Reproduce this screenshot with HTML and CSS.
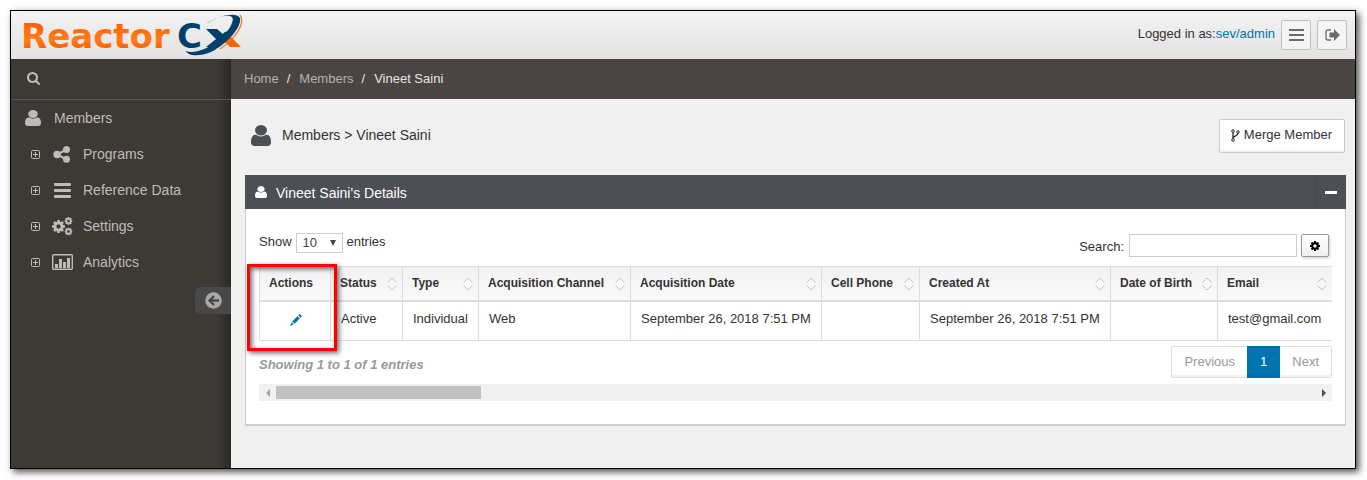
FILE: index.html
```html
<!DOCTYPE html>
<html lang="en">
<head>
    <meta charset="UTF-8">
    <meta name="viewport" content="width=device-width, initial-scale=1.0">
    <title>ReactorCX - Vineet Saini</title>
    <link rel="stylesheet" href="styles.css">
</head>
<body>

    <!-- Icon set -->
    <svg class="icon-defs" aria-hidden="true">
        <symbol id="i-user" viewBox="256 128 1280 1536" preserveAspectRatio="none"><path d="M1536 1399q0 109-62.5 187t-150.5 78h-854q-88 0-150.5-78t-62.5-187q0-85 8.5-160.5t31.5-152 58.5-131 94-89 134.5-34.5q131 128 313 128t313-128q76 0 134.5 34.5t94 89 58.5 131 31.5 152 8.5 160.5zm-256-887q0 159-112.5 271.5t-271.5 112.5-271.5-112.5-112.5-271.5 112.5-271.5 271.5-112.5 271.5 112.5 112.5 271.5z"/></symbol>
        <symbol id="i-search" viewBox="64 128 1664 1664"><path d="M1216 832q0-185-131.500-316.500t-316.500-131.500-316.500 131.500-131.500 316.500 131.500 316.500 316.500 131.500 316.500-131.500 131.500-316.500zm512 832q0 52-38 90t-90 38q-54 0-90-38l-343-342q-179 124-399 124-143 0-273.500-55.500t-225-150-150-225-55.500-273.500 55.500-273.500 150-225 225-150 273.500-55.500 273.500 55.500 225 150 150 225 55.500 273.500q0 220-124 399l343 343q37 37 37 90z"/></symbol>
        <symbol id="i-cog" viewBox="128 128 1536 1536"><path d="M1152 896q0-106-75-181t-181-75-181 75-75 181 75 181 181 75 181-75 75-181zm512-109v222q0 12-8 23t-20 13l-185 28q-19 54-39 91 35 50 107 138 10 12 10 25t-9 23q-27 37-99 108t-94 71q-12 0-26-9l-138-108q-44 23-91 38-16 136-29 186-7 28-36 28h-222q-14 0-24.500-8.500t-11.500-21.500l-28-184q-49-16-90-37l-141 107q-10 9-25 9-14 0-25-11-126-114-165-168-7-10-7-23 0-12 8-23 15-21 51-66.500t54-70.500q-27-50-41-99l-183-27q-13-2-21-12.500t-8-23.500v-222q0-12 8-23t19-13l186-28q14-46 39-92-40-57-107-138-10-12-10-24 0-10 9-23 26-36 98.500-107.500t94.500-71.500q13 0 26 10l138 107q44-23 91-38 16-136 29-186 7-28 36-28h222q14 0 24.500 8.500t11.500 21.500l28 184q49 16 90 37l142-107q9-9 24-9 13 0 25 10 129 119 165 170 7 8 7 22 0 12-8 23-15 21-51 66.500t-54 70.500q26 50 41 98l183 28q13 2 21 12.500t8 23.500z"/></symbol>
        <symbol id="i-cogs" viewBox="0 0 21 19"><use href="#i-cog" x="0" y="3" width="13" height="13"/><use href="#i-cog" x="12.500" y="0" width="8" height="8"/><use href="#i-cog" x="12.500" y="10.500" width="8" height="8"/></symbol>
        <symbol id="i-share" viewBox="0 0 18 17"><path d="M13.500 3.500L4 8.500l9.500 5" fill="none" stroke="currentColor" stroke-width="2"/><circle cx="4" cy="8.500" r="3.700"/><circle cx="13.500" cy="3.600" r="3.500"/><circle cx="13.500" cy="13.300" r="3.500"/></symbol>
        <symbol id="i-bars" viewBox="0 0 17 15"><path d="M1 0h15q1 0 1 1v1q0 1-1 1H1Q0 3 0 2V1Q0 0 1 0zM1 6h15q1 0 1 1v1q0 1-1 1H1Q0 9 0 8V7Q0 6 1 6zM1 12h15q1 0 1 1v1q0 1-1 1H1q-1 0-1-1v-1q0-1 1-1z"/></symbol>
        <symbol id="i-menu" viewBox="0 0 15 12"><path d="M0 0h15v2H0zM0 5h15v2H0zM0 10h15v2H0z"/></symbol>
        <symbol id="i-chart" viewBox="0 0 21 16"><rect x=".7" y=".7" width="19.600" height="14.600" rx="1" fill="none" stroke="currentColor" stroke-width="1.400"/><path d="M3 10h3v4H3zM7 5h3v9H7zM11 8h3v6h-3zM15 4h3v10h-3z"/></symbol>
        <symbol id="i-plus" viewBox="0 0 9 9"><rect x=".5" y=".5" width="8" height="8" rx="1" fill="none" stroke="currentColor"/><path d="M2 4h5v1H2zM4 2h1v5H4z"/></symbol>
        <symbol id="i-signout" viewBox="0 0 15 12"><path d="M6 1H3Q1 1 1 3v6q0 2 2 2h3" fill="none" stroke="currentColor" stroke-width="1.300"/><path d="M9 0l6 6-6 6V8.500H4.500v-5H9z"/></symbol>
        <symbol id="i-fork" viewBox="0 0 9 13"><g fill="none" stroke="currentColor"><circle cx="2" cy="2" r="1.300"/><circle cx="2" cy="11" r="1.300"/><circle cx="7" cy="3" r="1.300"/><path d="M2 3v7M7 4c0 3-4 2.500-5 5" stroke-width="1.400"/></g></symbol>
        <symbol id="i-pencil" viewBox="0 0 12 12"><path d="M2.200 7.400l5.200-5.200 2.400 2.400-5.200 5.200zM8.200 1.500l1-1q.6-.5 1.200 0l1.100 1.100q.5.600 0 1.200l-1 1zM1.700 8.200l2.100 2.100L0 12z"/></symbol>
        <symbol id="i-back" viewBox="0 0 17 17"><circle cx="8.500" cy="8.500" r="8.300"/><path d="M9 4L4.500 8.500 9 13M5 8.500h9" fill="none" stroke="#484848" stroke-width="2.300"/></symbol>
        <symbol id="i-sort" viewBox="0 0 10 14"><path d="M.5 5.500L5 1l4.500 4.500M.5 8.500L5 13l4.500-4.500" fill="none" stroke="#c4c4c4"/></symbol>
    </svg>

    <div class="app">
        <header class="header">
            <a class="logo" href="#" aria-label="ReactorCX">
                <svg width="226" height="46" viewBox="0 0 226 46">
                    <defs>
                        <linearGradient id="orange" x1="0" y1="0" x2="0" y2="1">
                            <stop offset=".2" stop-color="#ff6200"/>
                            <stop offset=".6" stop-color="#ff7d1c"/>
                            <stop offset=".8" stop-color="#ff6200"/>
                        </linearGradient>
                    </defs>
                    <text class="logo-text" x="2" y="36" fill="url(#orange)">Reactor</text>
                    <text class="logo-text logo-c" x="158" y="36">C</text>
                    <!-- emblem -->
                    <path d="M203 27l6-5 13 13h-11z" fill="#ff6200"/>
                    <path d="M187 17h11l7 6-6 6zM206 20l9-3-16 18h-12z" fill="#00416b"/>
                    <path d="M187 12C202 2 218 0 221 6c2 9-13 26-29 34-12 5-23 4-25-1 7 3 19-1 29-8 14-11 20-22 17-26-5-3-15 0-26 7z" fill="#00416b"/>
                    <path d="M221 3c6 8-5 24-20 34" fill="none" stroke="#ff7420" stroke-width="1.300"/>
                </svg>
            </a>
            <div class="login-info">
                <span>Logged in as:<a href="#">sev/admin</a></span>
                <button class="header-btn" aria-label="Toggle menu"><svg width="15" height="12"><use href="#i-menu"/></svg></button>
                <button class="header-btn" aria-label="Sign out"><svg width="15" height="12"><use href="#i-signout"/></svg></button>
            </div>
        </header>

        <div class="layout">
            <aside class="sidebar">
                <button class="sidebar-search" aria-label="Search"><svg width="13" height="13"><use href="#i-search"/></svg></button>
                <nav>
                    <a class="nav-top" href="#"><svg width="16" height="16"><use href="#i-user"/></svg>Members</a>
                    <a class="nav-item" href="#"><svg width="9" height="9"><use href="#i-plus"/></svg><span class="nav-icon"><svg width="18" height="17"><use href="#i-share"/></svg></span>Programs</a>
                    <a class="nav-item" href="#"><svg width="9" height="9"><use href="#i-plus"/></svg><span class="nav-icon"><svg width="17" height="15"><use href="#i-bars"/></svg></span>Reference Data</a>
                    <a class="nav-item" href="#"><svg width="9" height="9"><use href="#i-plus"/></svg><span class="nav-icon"><svg width="21" height="19"><use href="#i-cogs"/></svg></span>Settings</a>
                    <a class="nav-item" href="#"><svg width="9" height="9"><use href="#i-plus"/></svg><span class="nav-icon"><svg width="21" height="16"><use href="#i-chart"/></svg></span>Analytics</a>
                </nav>
                <button class="minify" aria-label="Collapse menu"><svg width="17" height="17"><use href="#i-back"/></svg></button>
            </aside>

            <main class="main">
                <nav class="breadcrumb">
                    <a href="#">Home</a><i>/</i><a href="#">Members</a><i>/</i><span>Vineet Saini</span>
                </nav>

                <div class="content">
                    <div class="page-head">
                        <h1><svg width="20" height="21"><use href="#i-user"/></svg>Members &gt; Vineet Saini</h1>
                        <button class="merge-btn"><svg width="9" height="13"><use href="#i-fork"/></svg>Merge Member</button>
                    </div>

                    <section class="panel">
                        <div class="panel-head">
                            <svg width="12" height="12"><use href="#i-user"/></svg>
                            <h2>Vineet Saini's Details</h2>
                            <button class="panel-toggle" aria-label="Collapse"><span></span></button>
                        </div>
                        <div class="panel-body">
                            <div class="toolbar">
                                <div class="length">
                                    <label for="length">Show</label>
                                    <span class="select-wrap">
                                        <select id="length"><option>10</option><option>25</option><option>50</option></select>
                                    </span>
                                    <span>entries</span>
                                </div>
                                <div class="filter">
                                    <label for="search">Search:</label>
                                    <input type="text" id="search">
                                    <button class="cog-btn" aria-label="Columns"><svg width="10" height="10"><use href="#i-cog"/></svg></button>
                                </div>
                            </div>

                            <div class="table-area">
                                <table>
                                    <colgroup>
                                        <col class="c-actions"><col class="c-status"><col class="c-type"><col class="c-channel"><col class="c-date"><col class="c-phone"><col class="c-date"><col class="c-birth"><col>
                                    </colgroup>
                                    <thead>
                                        <tr>
                                            <th>Actions</th>
                                            <th><div class="sortable">Status<svg width="10" height="14"><use href="#i-sort"/></svg></div></th>
                                            <th><div class="sortable">Type<svg width="10" height="14"><use href="#i-sort"/></svg></div></th>
                                            <th><div class="sortable">Acquisition Channel<svg width="10" height="14"><use href="#i-sort"/></svg></div></th>
                                            <th><div class="sortable">Acquisition Date<svg width="10" height="14"><use href="#i-sort"/></svg></div></th>
                                            <th><div class="sortable">Cell Phone<svg width="10" height="14"><use href="#i-sort"/></svg></div></th>
                                            <th><div class="sortable">Created At<svg width="10" height="14"><use href="#i-sort"/></svg></div></th>
                                            <th><div class="sortable">Date of Birth<svg width="10" height="14"><use href="#i-sort"/></svg></div></th>
                                            <th><div class="sortable">Email<svg width="10" height="14"><use href="#i-sort"/></svg></div></th>
                                        </tr>
                                    </thead>
                                    <tbody>
                                        <tr>
                                            <td class="edit"><a href="#" aria-label="Edit"><svg width="12" height="12"><use href="#i-pencil"/></svg></a></td>
                                            <td>Active</td>
                                            <td>Individual</td>
                                            <td>Web</td>
                                            <td>September 26, 2018 7:51 PM</td>
                                            <td></td>
                                            <td>September 26, 2018 7:51 PM</td>
                                            <td></td>
                                            <td>test@gmail.com</td>
                                        </tr>
                                    </tbody>
                                </table>
                                <div class="highlight"></div>
                            </div>

                            <div class="table-foot">
                                <em>Showing 1 to 1 of 1 entries</em>
                                <div class="pager">
                                    <button>Previous</button><button class="active">1</button><button>Next</button>
                                </div>
                            </div>

                            <div class="scrollbar">
                                <span class="arrow arrow-left"></span>
                                <div class="track"><div class="thumb"></div></div>
                                <span class="arrow arrow-right"></span>
                            </div>
                        </div>
                    </section>
                </div>
            </main>
        </div>
    </div>

</body>
</html>
```

FILE: styles.css
```css
* {
    box-sizing: border-box;
}

body {
    margin: 0;
    padding: 10px 11px 11px 10px;
    min-height: 100vh;
    display: flex;
    background: #fff;
    color: #333;
    font-family: "Liberation Sans", Arial, sans-serif;
    font-size: 13px;
    line-height: 18px;
}

a {
    color: #0073b1;
    text-decoration: none;
}

button {
    font: inherit;
    color: inherit;
    padding: 0;
    cursor: pointer;
}

svg {
    fill: currentColor;
    flex-shrink: 0;
}

.icon-defs {
    position: absolute;
    width: 0;
    height: 0;
}

.app {
    flex: 1;
    min-width: 0;
    display: flex;
    flex-direction: column;
    border: 1px solid #000;
    box-shadow: 3px 3px 7px rgba(0, 0, 0, 0.7);
}

/* Header */
.header {
    height: 48px;
    padding: 0 8px;
    display: flex;
    align-items: center;
    justify-content: space-between;
    background: linear-gradient(#f3f3f3, #e2e2e2);
}

.logo {
    height: 46px;
}

.logo-text {
    font-family: "DejaVu Sans", sans-serif;
    font-weight: bold;
    font-size: 34px;
}

.logo-c {
    fill: #00416b;
}

.login-info {
    display: flex;
    align-items: center;
    gap: 6px;
}

.login-info span {
    padding-bottom: 2px;
}

.header-btn {
    width: 30px;
    height: 30px;
    display: flex;
    align-items: center;
    justify-content: center;
    background: #f5f5f5;
    border: 1px solid #bfbfbf;
    border-radius: 2px;
    color: #6d6a69;
}

/* Sidebar */
.layout {
    flex: 1;
    display: flex;
}

.sidebar {
    width: 220px;
    flex-shrink: 0;
    background: linear-gradient(to left, #2b2825, #3d3935 14px);
    color: #c0bbb7;
    font-size: 14px;
}

.sidebar-search {
    width: 100%;
    height: 41px;
    padding: 0 0 2px 16px;
    display: flex;
    align-items: center;
    background: none;
    border: 0;
    border-bottom: 1px solid #525558;
}

.nav-top,
.nav-item {
    height: 36px;
    display: flex;
    align-items: center;
    color: inherit;
}

.nav-top {
    padding-left: 14px;
    gap: 13px;
}

.nav-item {
    padding-left: 20px;
}

.nav-icon {
    width: 43px;
    padding-left: 1px;
    display: flex;
    justify-content: center;
}

.minify {
    width: 36px;
    height: 27px;
    margin: 7px 0 0 auto;
    display: flex;
    align-items: center;
    justify-content: center;
    background: #484848;
    border: 0;
    border-radius: 5px 0 0 5px;
    color: #a8a8a8;
}

/* Main column */
.main {
    flex: 1;
    min-width: 0;
    background: #f0f0f0;
}

.breadcrumb {
    height: 40px;
    padding-left: 13px;
    display: flex;
    align-items: center;
    background: #4a4543;
    color: #e4e4e4;
}

.breadcrumb a {
    color: #b5b1ae;
}

.breadcrumb i {
    padding: 0 9px 0 8px;
    font-style: normal;
}

.content {
    padding: 20px 9px 20px 14px;
}

.page-head {
    display: flex;
    align-items: center;
    justify-content: space-between;
    padding-right: 1px;
    margin-bottom: 22px;
}

.page-head h1 {
    margin: 0;
    padding: 0 0 2px 6px;
    display: flex;
    align-items: center;
    gap: 11px;
    font-size: 14px;
    font-weight: normal;
}

.page-head h1 svg {
    color: #4c4f53;
}

.merge-btn {
    height: 34px;
    padding: 0 12px 2px 11px;
    display: flex;
    align-items: center;
    gap: 4px;
    background: #fff;
    border: 1px solid #ccc;
    border-radius: 2px;
    box-shadow: inset 0 -2px 0 rgba(0, 0, 0, 0.05);
}

/* Panel */
.panel-head {
    height: 34px;
    padding-left: 10px;
    display: flex;
    align-items: center;
    gap: 9px;
    background: #4c4f53;
    color: #fff;
}

.panel-head h2 {
    margin: 0;
    padding-top: 2px;
    flex: 1;
    font-size: 14px;
    font-weight: normal;
}

.panel-toggle {
    width: 31px;
    height: 34px;
    background: none;
    border: 0;
    border-left: 1px solid #45484c;
}

.panel-toggle span {
    display: block;
    width: 12px;
    height: 3px;
    margin: 0 auto;
    background: #fff;
}

.panel-body {
    padding: 24px 13px 23px;
    background: #fff;
    border: 1px solid #ccc;
    border-top: 0;
    border-bottom-width: 2px;
}

.toolbar {
    display: flex;
    justify-content: space-between;
    padding-right: 3px;
    margin-bottom: 8px;
}

.length,
.filter {
    display: flex;
    align-items: center;
    gap: 4px;
}

.length {
    height: 20px;
}

.length label,
.length > span:last-child {
    padding-bottom: 2px;
}

.filter {
    height: 25px;
}

.filter label {
    padding: 2px 1px 0 0;
}

.select-wrap {
    position: relative;
}

.select-wrap::after {
    content: "";
    position: absolute;
    right: 7px;
    top: 7px;
    border: 3px solid transparent;
    border-top: 6px solid #444;
    border-bottom: 0;
    pointer-events: none;
}

.length select {
    display: block;
    width: 47px;
    height: 20px;
    padding: 0 6px;
    appearance: none;
    background: #fff;
    border: 1px solid #ccc;
    border-radius: 0;
    color: #444;
    font: inherit;
}

.filter input {
    width: 168px;
    height: 23px;
    border: 1px solid #ccc;
}

.cog-btn {
    width: 28px;
    height: 23px;
    display: flex;
    align-items: center;
    justify-content: center;
    background: linear-gradient(#fff, #f0f0f0);
    border: 1px solid #999;
    border-radius: 2px;
    box-shadow: 1px 1px 3px rgba(0, 0, 0, 0.2);
    color: #000;
}

/* Table */
.table-area {
    position: relative;
}

table {
    width: 100%;
    table-layout: fixed;
    border-collapse: separate;
    border-spacing: 0;
}

.c-actions { width: 71px; }
.c-status { width: 72px; }
.c-type { width: 76px; }
.c-channel { width: 152px; }
.c-date { width: 191px; }
.c-phone { width: 98px; }
.c-birth { width: 107px; }

th,
td {
    padding: 0 9px;
    text-align: left;
    border-left: 1px solid #ddd;
    white-space: nowrap;
}

th {
    height: 36px;
    padding-bottom: 2px;
    background: linear-gradient(#f2f2f2, #fafafa);
    border-top: 1px solid #ddd;
    border-bottom: 2px solid #ddd;
    font-size: 12px;
}

th:nth-child(n+2) {
    padding-right: 5px;
}

td {
    height: 39px;
    padding: 0 9px 4px 10px;
    border-bottom: 1px solid #ddd;
}

.sortable {
    display: flex;
    align-items: center;
    justify-content: space-between;
}

.sortable svg {
    margin-top: 2px;
}

.edit {
    text-align: center;
}

.edit svg {
    display: block;
    margin: 2px auto 0;
}

.highlight {
    position: absolute;
    left: -12px;
    top: -2px;
    width: 90px;
    height: 87px;
    border: 3px solid #f00;
    box-shadow: 2px 2px 5px rgba(0, 0, 0, 0.6), inset 2px 2px 5px rgba(0, 0, 0, 0.6);
    pointer-events: none;
}

.table-foot {
    display: flex;
    align-items: center;
    justify-content: space-between;
    margin: 5px 0 6px;
}

.table-foot em {
    padding-top: 6px;
    color: #999;
    font-weight: bold;
}

.pager {
    display: flex;
}

.pager button {
    height: 32px;
    padding: 0 12px;
    background: #fff;
    border: 1px solid #ddd;
    box-shadow: inset 0 -2px 0 rgba(0, 0, 0, 0.05);
    color: #999;
}

.pager button:first-child {
    border-right: 0;
    border-radius: 2px 0 0 2px;
}

.pager button:last-child {
    border-left: 0;
    border-radius: 0 2px 2px 0;
}

.pager .active {
    background: #0073b1;
    border-color: #0073b1;
    color: #fff;
}

/* Horizontal scrollbar */
.scrollbar {
    height: 17px;
    display: flex;
    align-items: center;
    background: #f1f1f1;
}

.arrow {
    width: 17px;
    display: flex;
    justify-content: center;
}

.arrow::before {
    content: "";
    border: 4px solid transparent;
}

.arrow-left::before {
    border-left: 0;
    border-right-color: #a3a3a3;
}

.arrow-right::before {
    border-right: 0;
    border-left-color: #505050;
}

.track {
    flex: 1;
}

.thumb {
    width: 205px;
    height: 13px;
    background: #c1c1c1;
}
```
